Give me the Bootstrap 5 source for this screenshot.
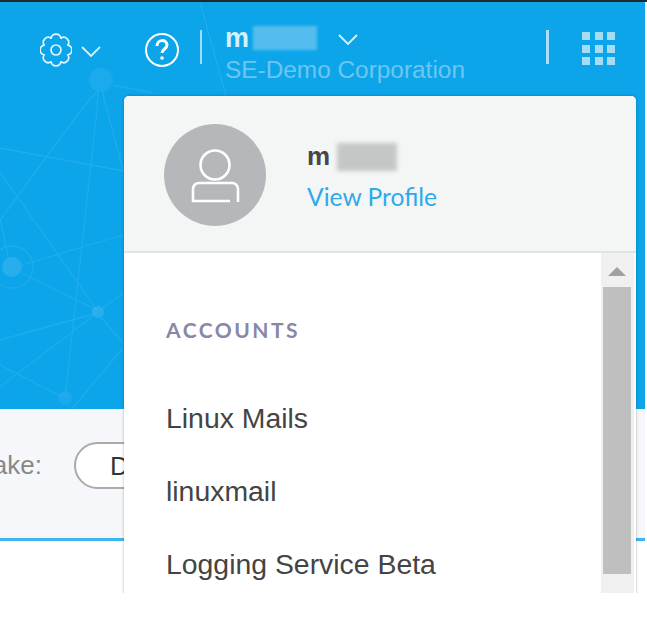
<!DOCTYPE html>
<html lang="en"><head><meta charset="utf-8"><title>Menu</title>
<link href="https://cdn.jsdelivr.net/npm/bootstrap@5.3.0/dist/css/bootstrap.min.css" rel="stylesheet">
<style>
html,body{margin:0;background:#fff;overflow:hidden}
.stage{height:593px;position:relative;overflow:hidden;width:647px;font-family:"Liberation Sans",Arial,sans-serif}
.topline{height:2px;background:#23282c}
.hero{height:407px;width:645px;background:#0ca5ea;position:relative}
.mesh{position:absolute;left:0;top:0;width:645px;height:407px}
.topnav{position:relative;height:92px;padding-left:40px}
.icon-gear{width:32px;height:34px;margin-top:31px;flex:none}
.chev{width:20px;height:12px;flex:none}
.chev-gear{margin:44px 0 0 9px}
.icon-help{width:36px;height:36px;margin:30px 0 0 43px;flex:none}
.sep{width:2px;height:34px;background:rgba(255,255,255,.6);margin:28px 0 0 20px;flex:none}
.who{margin-left:23px;width:240px;padding-top:20px;flex:none}
.whoname{font-size:27px;font-weight:700;color:#d7f0fc;line-height:32px;height:32px}
.blurblock{display:inline-block;width:64px;height:24px;background:#55bdee;filter:blur(1.5px);margin-left:4px;vertical-align:-3px}
.whoorg{font-size:24.4px;line-height:32px;color:#6cc6f1;white-space:nowrap}
.chev-user{margin:32px 0 0 -127px}
.sep2{width:3px;height:34px;background:rgba(255,255,255,.65);margin:28px 0 0 188px;flex:none}
.apps{display:grid;grid-template-columns:repeat(3,8px);grid-auto-rows:8px;gap:4.5px;margin:30px 0 0 33px;flex:none}
.apps span{background:#a7dcf7}
.subbar{height:129px;width:645px;background:#f6f7fb;padding:33px 0 0 0;color:#777}
.subline{height:3px;width:645px;background:#3db5ee}
.lbl{font-size:26px;line-height:46px;color:#888;width:42px;overflow:hidden;white-space:nowrap;flex:none}
.lbl span{flex:none}
.pill{width:90px;height:47px;margin-left:32px;border:2px solid #aaa;border-radius:24px;background:#fff;font-size:26px;color:#333;padding:2px 0 0 34px;line-height:40px}
.menu{position:absolute;left:124px;top:96px;width:512px;height:520px;background:#fff;border-radius:5px 5px 0 0;box-shadow:0 0 3px rgba(0,0,0,.3);overflow:hidden}
.menuhead{height:157px;background:#f4f6f6;border-bottom:2px solid #e2e4e4;padding:28px 0 0 40px}
.avatar{width:102px;height:102px;border-radius:50%;background:#b5b8ba;flex:none}
.avatar svg{display:block;width:102px;height:102px}
.mhtext{margin-left:41px;padding-top:17px}
.mhname{font-size:26px;font-weight:700;color:#474747;line-height:30px;height:30px;white-space:nowrap}
.greyblur{display:inline-block;width:60px;height:28px;background:#c5c6c6;filter:blur(2px);margin-left:7px;vertical-align:-6px}
.mhlink{font-family:Lato,sans-serif;font-size:24.6px;color:#2cabeb;line-height:32px;margin-top:10px;text-decoration:none;display:block}
.menubody{height:340px}
.list{width:477px;padding:59px 0 0 42px}
.acct{font-family:Lato,sans-serif;font-weight:700;font-size:21px;letter-spacing:2.5px;color:#8888a6;line-height:36px;margin-bottom:52px}
.entry{font-size:28.4px;color:#444;line-height:36px;margin-bottom:37px;white-space:nowrap}
.track{width:33px;background:#f0f0f0;padding:14px 3px 0 2px;flex:none;height:340px}
.arrow{width:0;height:0;border-left:9px solid transparent;border-right:9px solid transparent;border-bottom:9px solid #a0a0a0;margin:0 auto 11px}
.thumb{height:287px;width:28px;background:#bfbfbf}
</style></head>
<body>
<div class="stage">
<div class="topline"></div>
<div class="hero">
<svg class="mesh" viewBox="0 2 645 407" fill="none" stroke="#3fb7ee" stroke-opacity=".38" stroke-width="1.3" aria-hidden="true">
<path d="M200 2L226 96M0 148L124 171M81 110L0 220M0 172L97 310M123 235L22 265M22 273L97 310M0 340L97 313M0 387L97 313M123 293L100 310M100 316L123 343M97 110L65 397M123 348L72 409M0 365L63 397M0 218L8 257M107 110L123 170"/>
<path d="M98 90L81 110M98 90L97 110M102 90L107 110M113 85L153 93"/>
<circle cx="12" cy="267" r="21"/>
<g fill="#3fb7ee" fill-opacity=".55" stroke="none"><circle cx="12" cy="267" r="10"/><circle cx="98" cy="312" r="6"/><circle cx="65" cy="398" r="7" fill-opacity=".3"/><circle cx="101" cy="80" r="12" fill-opacity=".3"/></g>
</svg>
<nav class="topnav d-flex align-items-start">
<svg class="icon-gear" viewBox="0 0 32 34" fill="none" stroke="#e4f5fd" stroke-width="1.700" stroke-linejoin="round" aria-hidden="true"><circle cx="16" cy="17" r="5"/><path d="M11.100 5.170A5 5 0 0 1 20.900 5.170A5 5 0 0 1 27.830 12.100A5 5 0 0 1 27.830 21.900A5 5 0 0 1 20.900 28.830A5 5 0 0 1 11.100 28.830A5 5 0 0 1 4.170 21.900A5 5 0 0 1 4.170 12.100A5 5 0 0 1 11.100 5.170Z"/></svg>
<svg class="chev chev-gear" viewBox="0 0 20 12" fill="none" stroke="#d7f0fc" stroke-width="1.800" aria-hidden="true"><path d="M1 1l9 9 9-9"/></svg>
<svg class="icon-help" viewBox="0 0 36 36" fill="none" stroke="#fff" stroke-width="2" aria-hidden="true"><circle cx="18" cy="18" r="16"/><path d="M13 14c0-7 10-7 10-1 0 4-5 4-5 8" stroke-width="3"/><circle cx="18" cy="26" r="1.800" fill="#fff" stroke="none"/></svg>
<span class="sep"></span>
<div class="who"><div class="whoname">m<span class="blurblock"></span></div><div class="whoorg">SE-Demo Corporation</div></div>
<svg class="chev chev-user" viewBox="0 0 20 12" fill="none" stroke="#d7f0fc" stroke-width="1.800" aria-hidden="true"><path d="M1 1l9 9 9-9"/></svg>
<span class="sep2"></span>
<div class="apps"><span></span><span></span><span></span><span></span><span></span><span></span><span></span><span></span><span></span></div>
</nav>
</div>
<div class="subbar d-flex"><div class="lbl d-flex justify-content-end"><span>ake:</span></div><div class="pill">D</div></div>
<div class="subline"></div>
<div class="menu">
<div class="menuhead d-flex">
<div class="avatar"><svg viewBox="0 0 102 102" fill="none" stroke="#fff" stroke-width="2.600" aria-hidden="true"><circle cx="51" cy="41" r="14.500"/><path d="M66 77H29V65a6 6 0 0 1 6-6h33a6 6 0 0 1 6 6v13"/></svg></div>
<div class="mhtext"><div class="mhname">m<span class="greyblur"></span></div><a class="mhlink" href="#">View Profile</a></div>
</div>
<div class="menubody d-flex">
<div class="list">
<div class="acct">ACCOUNTS</div>
<div class="entry">Linux Mails</div>
<div class="entry">linuxmail</div>
<div class="entry">Logging Service Beta</div>
</div>
<div class="track"><div class="arrow"></div><div class="thumb"></div></div>
</div>
</div>
</div>
<script src="https://cdn.jsdelivr.net/npm/bootstrap@5.3.0/dist/js/bootstrap.bundle.min.js"></script>
</body></html>
